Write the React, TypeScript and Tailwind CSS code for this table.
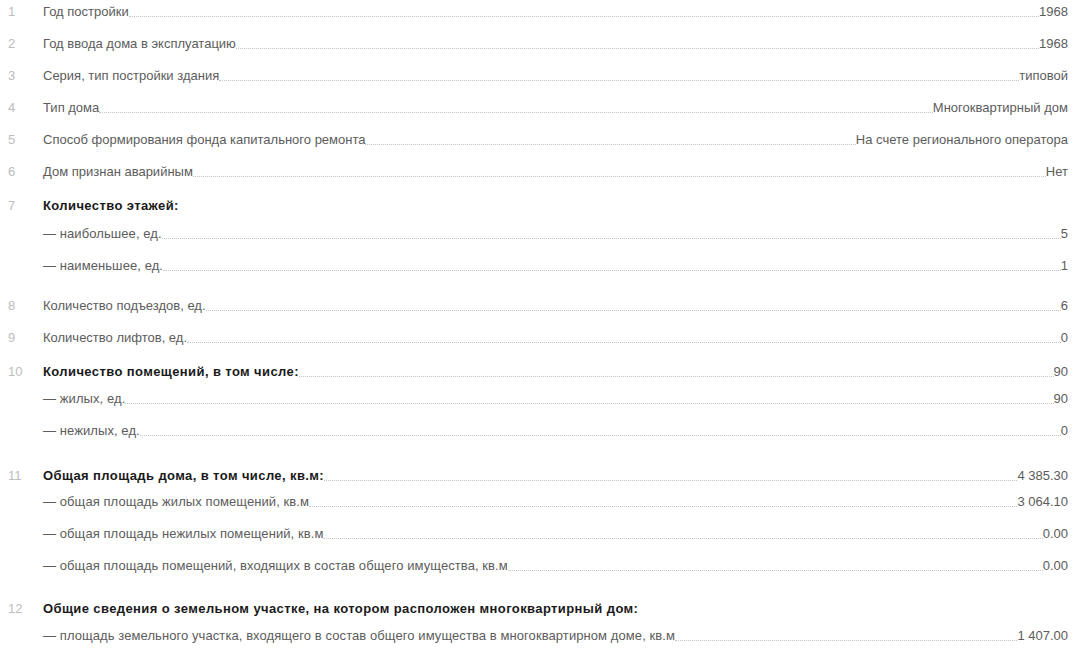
type Row = {
  label: string;
  value?: string;
};

type Item = {
  num: string;
  label: string;
  value?: string;
  subs?: Row[];
  head: string;
  wrap: string;
};

const items: Item[] = [
  { num: "1", label: "Год постройки", value: "1968", head: "", wrap: "" },
  { num: "2", label: "Год ввода дома в эксплуатацию", value: "1968", head: "", wrap: "" },
  { num: "3", label: "Серия, тип постройки здания", value: "типовой", head: "", wrap: "" },
  { num: "4", label: "Тип дома", value: "Многоквартирный дом", head: "", wrap: "" },
  {
    num: "5",
    label: "Способ формирования фонда капитального ремонта",
    value: "На счете регионального оператора",
    head: "",
    wrap: "",
  },
  { num: "6", label: "Дом признан аварийным", value: "Нет", head: "", wrap: "" },
  {
    num: "7",
    label: "Количество этажей:",
    subs: [
      { label: "— наибольшее, ед.", value: "5" },
      { label: "— наименьшее, ед.", value: "1" },
    ],
    head: "pt-[6px] pb-2",
    wrap: "pb-2",
  },
  { num: "8", label: "Количество подъездов, ед.", value: "6", head: "", wrap: "" },
  { num: "9", label: "Количество лифтов, ед.", value: "0", head: "", wrap: "" },
  {
    num: "10",
    label: "Количество помещений, в том числе:",
    value: "90",
    subs: [
      { label: "— жилых, ед.", value: "90" },
      { label: "— нежилых, ед.", value: "0" },
    ],
    head: "pt-[6px] pb-[7px]",
    wrap: "pb-[7px]",
  },
  {
    num: "11",
    label: "Общая площадь дома, в том числе, кв.м:",
    value: "4 385.30",
    subs: [
      { label: "— общая площадь жилых помещений, кв.м", value: "3 064.10" },
      { label: "— общая площадь нежилых помещений, кв.м", value: "0.00" },
      {
        label: "— общая площадь помещений, входящих в состав общего имущества, кв.м",
        value: "0.00",
      },
    ],
    head: "pt-2.5 pb-1.5",
    wrap: "pb-1.5",
  },
  {
    num: "12",
    label: "Общие сведения о земельном участке, на котором расположен многоквартирный дом:",
    subs: [
      {
        label:
          "— площадь земельного участка, входящего в состав общего имущества в многоквартирном доме, кв.м",
        value: "1 407.00",
      },
    ],
    head: "pt-[9px] pb-[7px]",
    wrap: "",
  },
];

function Leader() {
  return <span className="mb-[3px] flex-1 border-b border-dotted border-[#c4c4c4]" />;
}

function Line({
  num,
  label,
  value,
  bold,
  sub,
}: {
  num?: string;
  label: string;
  value?: string;
  bold?: boolean;
  sub?: boolean;
}) {
  let cls = "text-[#5c5c5c]";
  if (bold) cls = "font-bold tracking-[0.4px] text-[#1a1a1a]";
  else if (sub) cls = "tracking-[0.08px] text-[#5c5c5c]";

  return (
    <div className="flex h-4 items-end leading-4">
      <span className="w-[35px] shrink-0 text-[#bdbdbd]">{num}</span>
      <span className={cls}>{label}</span>
      {value !== undefined && (
        <>
          <Leader />
          <span className="text-[#5c5c5c]">{value}</span>
        </>
      )}
    </div>
  );
}

export default function App() {
  return (
    <div
      className="min-h-screen bg-white pl-2 pr-[11px] text-[13px]"
      style={{ fontFamily: '"Liberation Sans", Arial, sans-serif' }}
    >
      {items.map((it) =>
        it.subs ? (
          <div key={it.num} className={it.wrap}>
            <div className={it.head}>
              <Line num={it.num} label={it.label} value={it.value} bold />
            </div>
            {it.subs.map((s) => (
              <div key={s.label} className="pt-1 pb-3">
                <Line label={s.label} value={s.value} sub />
              </div>
            ))}
          </div>
        ) : (
          <div key={it.num} className="pt-1 pb-3">
            <Line num={it.num} label={it.label} value={it.value} />
          </div>
        )
      )}
    </div>
  );
}
